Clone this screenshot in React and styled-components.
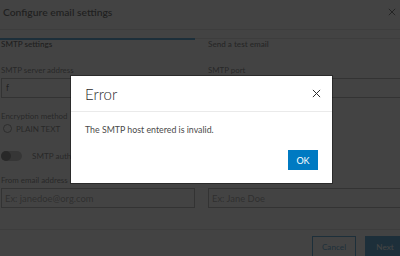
import React from 'react';
import styled, { createGlobalStyle } from 'styled-components';

const GlobalStyle = createGlobalStyle`
  html, body {
    margin: 0;
    padding: 0;
    background: #ffffff;
  }
  * { box-sizing: border-box; }
`;

const Screen = styled.div`
  position: relative;
  width: 400px;
  height: 256px;
  overflow: hidden;
  background: #ffffff;
  font-family: Lato, "Noto Sans", sans-serif;
  color: #151515;
`;

const Panel = styled.div`
  width: 410px;
  display: flex;
  flex-direction: column;
`;

const Header = styled.div`
  width: 400px;
  height: 30px;
  display: flex;
  align-items: center;
  justify-content: space-between;
  padding: 0 4px 6px 3px;
  border-bottom: 1px solid #d4d4d4;
`;

const Title = styled.h1`
  margin: 0;
  font-size: 10.3px;
  font-weight: 600;
  color: #151515;
`;

const CloseIcon = ({ size = 8, color = '#151515' }) => (
  <svg width={size} height={size} viewBox="0 0 10 10" fill="none">
    <path d="M1 1 L9 9 M9 1 L1 9" stroke={color} strokeWidth="1.1" />
  </svg>
);

const TabRow = styled.div`
  display: grid;
  grid-template-columns: 195px 1fr;
  margin-top: 8px;
  border-top: 1px solid #d4d4d4;
`;

const Tab = styled.div`
  margin-top: -1px;
  border-top: 2px solid ${p => (p.active ? '#007ac2' : 'transparent')};
  padding-left: ${p => (p.active ? '1px' : '13px')};
  font-size: 8.1px;
  font-weight: 600;
  color: ${p => (p.active ? '#151515' : '#4a4a4a')};
  line-height: 9px;
`;

const Form = styled.div`
  display: grid;
  grid-template-columns: 194px 202px;
  column-gap: 13px;
  padding: 16px 0 0 1px;
`;

const Field = styled.div`
  display: flex;
  flex-direction: column;
  justify-content: flex-end;
  margin-bottom: ${p => p.mb || 0}px;
`;

const Label = styled.label`
  font-size: 7.9px;
  line-height: 10px;
  color: #4a4a4a;
  margin-bottom: 3px;
`;

const Input = styled.div`
  height: 20px;
  border: 1px solid #959595;
  display: flex;
  align-items: center;
  padding-left: ${p => (p.placeholder ? 3 : 4)}px;
  font-size: ${p => (p.placeholder ? 9.4 : 8.5)}px;
  color: ${p => (p.placeholder ? '#7a7a7a' : '#151515')};
`;

const RadioRow = styled.div`
  display: flex;
  align-items: center;
  height: 9px;
  gap: 4px;
  padding-left: 2px;
  font-size: 8.1px;
  color: #4a4a4a;
`;

const Radio = styled.span`
  width: 9px;
  height: 9px;
  border: 1px solid #6a6a6a;
  border-radius: 50%;
`;

const SwitchRow = styled.div`
  display: flex;
  align-items: center;
  gap: 10px;
  margin: 18px 0 14px;
  font-size: 8.1px;
  color: #4a4a4a;
`;

const Track = styled.span`
  width: 21px;
  height: 10px;
  border-radius: 5px;
  background: #a8a8a8;
  display: flex;
  align-items: center;
`;

const Knob = styled.span`
  width: 10px;
  height: 10px;
  border-radius: 50%;
  background: #4a4a4a;
`;

const Footer = styled.div`
  margin-top: 21px;
  border-top: 1px solid #d4d4d4;
  display: flex;
  justify-content: flex-end;
  gap: 9px;
  padding: 6px 5px 0 0;
`;

const Button = styled.button`
  height: 22px;
  width: ${p => p.w}px;
  font-family: inherit;
  font-size: 8.2px;
  border: 1px solid #007ac2;
  background: ${p => (p.primary ? '#007ac2' : '#ffffff')};
  color: ${p => (p.primary ? '#ffffff' : '#007ac2')};
  padding: 0;
`;

const Overlay = styled.div`
  position: absolute;
  inset: 0;
  background: rgba(34, 34, 34, 0.85);
  display: flex;
  align-items: center;
  justify-content: center;
`;

const Dialog = styled.div`
  width: 261px;
  margin: 3px 0 0 3px;
  background: #ffffff;
  box-shadow: 0 0 0 1px rgba(0, 0, 0, 0.35);
`;

const DialogHead = styled.div`
  height: 36px;
  display: flex;
  align-items: center;
  justify-content: space-between;
  padding: 0 11px 0 14px;
  border-bottom: 1px solid #eaeaea;
`;

const DialogTitle = styled.h2`
  margin: 0;
  font-size: 15px;
  font-weight: 300;
  color: #2b2b2b;
`;

const DialogBody = styled.div`
  padding: 12px 14px 13px 14px;
  display: flex;
  flex-direction: column;
`;

const Message = styled.p`
  margin: 0 0 15px;
  font-size: 8.8px;
  line-height: 11px;
  color: #4a4a4a;
`;

const OkButton = styled.button`
  align-self: flex-end;
  width: 30px;
  height: 20px;
  border: none;
  background: #007ac2;
  color: #ffffff;
  font-family: inherit;
  font-size: 9px;
  padding: 0;
`;

export default function App() {
  return (
    <Screen>
      <GlobalStyle />
      <Panel>
        <Header>
          <Title>Configure email settings</Title>
          <CloseIcon size={8} />
        </Header>
        <TabRow>
          <Tab active>SMTP settings</Tab>
          <Tab>Send a test email</Tab>
        </TabRow>
        <Form>
          <Field mb={13}>
            <Label>SMTP server address</Label>
            <Input>f</Input>
          </Field>
          <Field mb={13}>
            <Label>SMTP port</Label>
            <Input />
          </Field>
          <div>
            <Label as="div">Encryption method</Label>
            <RadioRow>
              <Radio />
              PLAIN TEXT
            </RadioRow>
            <SwitchRow>
              <Track><Knob /></Track>
              SMTP authentication
            </SwitchRow>
            <Field>
              <Label>From email address</Label>
              <Input placeholder="true">Ex: janedoe@org.com</Input>
            </Field>
          </div>
          <Field>
            <Label>From name</Label>
            <Input placeholder="true">Ex: Jane Doe</Input>
          </Field>
        </Form>
        <Footer>
          <Button w={44}>Cancel</Button>
          <Button primary w={40}>Next</Button>
        </Footer>
      </Panel>
      <Overlay>
        <Dialog>
          <DialogHead>
            <DialogTitle>Error</DialogTitle>
            <CloseIcon size={9} color="#2b2b2b" />
          </DialogHead>
          <DialogBody>
            <Message>The SMTP host entered is invalid.</Message>
            <OkButton>OK</OkButton>
          </DialogBody>
        </Dialog>
      </Overlay>
    </Screen>
  );
}
